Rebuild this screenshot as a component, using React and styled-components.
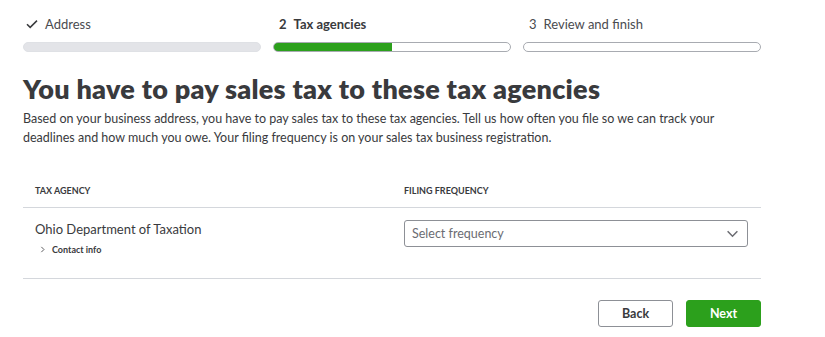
import React from 'react'
import styled, {createGlobalStyle} from 'styled-components'

const Global = createGlobalStyle`
  body {
    margin: 0;
    background: #fff;
    font-family: Lato, "Open Sans", sans-serif;
    color: #393a3d;
  }
`;

const Page = styled.div`
  width: 738px;
  padding: 15px 0 0 23px;
`;

const Stepper = styled.div`
  display: grid;
  grid-template-columns: repeat(3, 1fr);
  column-gap: 12px;
`;

const Step = styled.div`
  display: flex;
  flex-direction: column;
  gap: 10px;
`;

const StepLabel = styled.div`
  display: flex;
  align-items: center;
  gap: 7px;
  height: 17px;
  padding-left: ${p => p.$check ? 3 : 6}px;
  font-size: 13px;
  font-weight: ${p => p.$active ? 700 : 400};
  color: ${p => p.$active ? '#393a3d' : '#4a4b4f'};
`;

const Bar = styled.div`
  height: 10px;
  border-radius: 5px;
  box-sizing: border-box;
  border: 1px solid ${p => p.$done ? '#dfe1e5' : '#a8abb1'};
  background: ${p => p.$done
    ? '#e3e4e8'
    : `linear-gradient(to right, #2ca01c ${p.$fill}%, #fff ${p.$fill}%)`};
  overflow: hidden;
`;

const Title = styled.h1`
  margin: 21px 0 0;
  font-size: 27px;
  line-height: 32px;
  font-weight: 800;
  color: #393a3d;
  letter-spacing: 0.28px;
`;

const Intro = styled.p`
  margin: 4px 0 0;
  font-size: 12.5px;
  line-height: 19px;
  color: #393a3d;
  width: 720px;
`;

const Table = styled.div`
  margin-top: 25px;
`;

const Row = styled.div`
  display: grid;
  grid-template-columns: 1fr 1fr;
  border-bottom: 1px solid #d4d7dc;
  height: ${p => p.$h}px;
  box-sizing: border-box;
`;

const HeadCell = styled.div`
  padding: 13px 12px 0;
  font-size: 9px;
  font-weight: 700;
  text-transform: uppercase;
  color: #393a3d;
`;

const Cell = styled.div`
  padding: ${p => p.$top}px 12px 0;
`;

const Agency = styled.div`
  font-size: 13px;
  line-height: 16px;
`;

const Contact = styled.div`
  display: flex;
  align-items: center;
  gap: 6px;
  margin-top: 7px;
  padding-left: 4px;
  font-size: 9px;
  font-weight: 700;
`;

const Select = styled.div`
  width: 344px;
  height: 27px;
  box-sizing: border-box;
  border: 1px solid #8d9096;
  border-radius: 3px;
  display: flex;
  align-items: center;
  justify-content: space-between;
  padding: 0 8px 0 7px;
  font-size: 12.5px;
  color: #6b6c72;
`;

const Actions = styled.div`
  display: flex;
  justify-content: flex-end;
  gap: 13px;
  margin-top: 21px;
`;

const Button = styled.button`
  width: 75px;
  height: 27px;
  border-radius: 3px;
  font-family: inherit;
  font-size: 12.5px;
  font-weight: 700;
  cursor: pointer;
  border: ${p => p.$primary ? '1px solid #2ca01c' : '1px solid #8d9096'};
  background: ${p => p.$primary ? '#2ca01c' : '#fff'};
  color: ${p => p.$primary ? '#fff' : '#393a3d'};
`;

const Check = () => (
  <svg width="12" height="10" viewBox="0 0 12 10" fill="none">
    <path d="M1 5.2 L4.2 8.4 L11 1.6" stroke="#393a3d" strokeWidth="1.5" />
  </svg>
);

const Chevron = ({size = 12, right, color = '#6b6c72'}) => (
  <svg width={size} height={size} viewBox="0 0 12 12" fill="none"
    style={right ? {transform: 'rotate(-90deg)'} : undefined}>
    <path d="M1.5 4 L6 8.5 L10.5 4" stroke={color} strokeWidth="1.4" />
  </svg>
);

export default function App() {
  return (
    <Page>
      <Global />
      <Stepper>
        <Step>
          <StepLabel $check><Check />Address</StepLabel>
          <Bar $done />
        </Step>
        <Step>
          <StepLabel $active><span>2</span>Tax agencies</StepLabel>
          <Bar $fill={50} />
        </Step>
        <Step>
          <StepLabel><span>3</span>Review and finish</StepLabel>
          <Bar $fill={0} />
        </Step>
      </Stepper>

      <Title>You have to pay sales tax to these tax agencies</Title>
      <Intro>
        Based on your business address, you have to pay sales tax to these tax agencies. Tell us how often you file so we can track your
        deadlines and how much you owe. Your filing frequency is on your sales tax business registration.
      </Intro>

      <Table>
        <Row $h={36}>
          <HeadCell>Tax agency</HeadCell>
          <HeadCell>Filing frequency</HeadCell>
        </Row>
        <Row $h={71}>
          <Cell $top={13}>
            <Agency>Ohio Department of Taxation</Agency>
            <Contact><Chevron size={7} right color="#393a3d" />Contact info</Contact>
          </Cell>
          <Cell $top={12}>
            <Select>
              <span>Select frequency</span>
              <Chevron size={13} />
            </Select>
          </Cell>
        </Row>
      </Table>

      <Actions>
        <Button>Back</Button>
        <Button $primary>Next</Button>
      </Actions>
    </Page>
  )
}
